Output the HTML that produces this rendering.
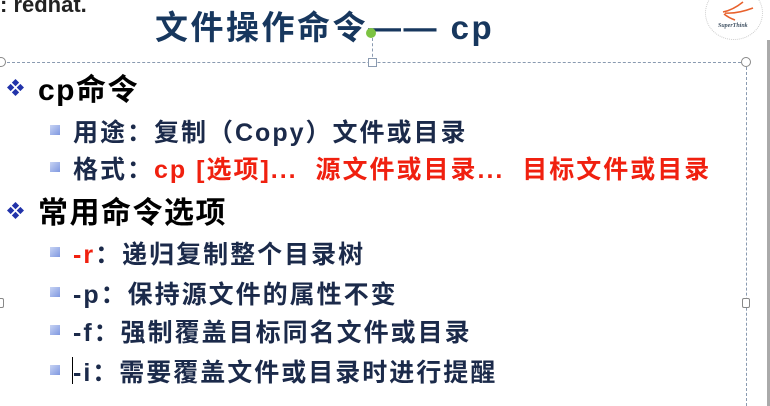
<!DOCTYPE html>
<html><head><meta charset="utf-8"><style>
body{margin:0;width:770px;height:406px;background:#fff;overflow:hidden;position:relative;font-family:"Liberation Sans","Noto Sans CJK SC",sans-serif;font-weight:bold}
.a{position:absolute;white-space:nowrap}
.t{left:155px;top:1px;font-size:33px;color:#17375e;letter-spacing:2.5px}
.h{font-size:30px;color:#000;left:38px;letter-spacing:1.5px}
.l{font-size:25px;color:#1b2a4a;left:73px;letter-spacing:2px}
.r{color:#f0200f}
.sq{position:absolute;left:50px;width:10px;height:10px;background:linear-gradient(135deg,#c8d4f4,#7f98e0)}
.dm{position:absolute;left:7px;width:17px;height:17px}
</style></head><body>
<div class="a" style="left:0;top:-8px;font-size:22px;color:#222;font-weight:bold;letter-spacing:0">: redhat.</div>
<div class="a t">文件操作命令—— cp</div>
<div class="a" style="left:705px;top:-14px;width:56px;height:52px;border:1px dotted #ccc;border-radius:50%"></div>
<svg class="a" style="left:715px;top:0" width="45" height="30"><path d="M8 12 Q18 10 28 2 M10 13 Q22 14 38 8 M9 14 Q14 18 20 20" stroke="#e8612c" stroke-width="1.5" fill="none"/><text x="3" y="27" font-size="6" fill="#456" font-style="italic" font-family="Liberation Serif">SuperThink</text></svg>
<div class="a" style="left:767px;top:40px;width:3px;height:366px;background:#aaa"></div>
<div class="a" style="left:2px;top:62px;width:744px;border-top:1px dashed #8a9ab0"></div>
<div class="a" style="left:746px;top:62px;height:344px;border-left:1px dashed #8a9ab0"></div>
<div class="a" style="left:372px;top:38px;height:24px;border-left:1px dashed #8a9ab0"></div>
<div class="a" style="left:366px;top:28px;width:10px;height:10px;border-radius:50%;background:#7cc342"></div>
<div class="a" style="left:368px;top:58px;width:7px;height:7px;border:1px solid #8a9ab0;background:#fff"></div>
<div class="a" style="left:741px;top:57px;width:8px;height:8px;border:1px solid #888;border-radius:50%;background:#fff"></div>
<div class="a" style="left:-4px;top:57px;width:8px;height:8px;border:1px solid #888;border-radius:50%;background:#fff"></div>
<div class="a" style="left:742px;top:298px;width:6px;height:8px;border:1px solid #888;border-radius:2px;background:#fff"></div>
<div class="a" style="left:-4px;top:298px;width:6px;height:8px;border:1px solid #888;border-radius:2px;background:#fff"></div>

<svg class="dm" style="top:79px" viewBox="0 0 14 14"><path d="M7 0L10 3 7 6 4 3ZM7 8L10 11 7 14 4 11ZM0 7L3 4 6 7 3 10ZM8 7L11 4 14 7 11 10Z" fill="#2233aa"/></svg>
<div class="a h" style="top:65px">cp命令</div>
<div class="sq" style="top:125px"></div>
<div class="a l" style="top:113px">用途：复制（Copy）文件或目录</div>
<div class="sq" style="top:162px"></div>
<div class="a l" style="top:150px">格式：<span class="r">cp [选项]...&nbsp; 源文件或目录...&nbsp; 目标文件或目录</span></div>
<svg class="dm" style="top:202px" viewBox="0 0 14 14"><path d="M7 0L10 3 7 6 4 3ZM7 8L10 11 7 14 4 11ZM0 7L3 4 6 7 3 10ZM8 7L11 4 14 7 11 10Z" fill="#2233aa"/></svg>
<div class="a h" style="top:188px">常用命令选项</div>
<div class="sq" style="top:247px"></div>
<div class="a l" style="top:235px"><span class="r">-r</span>：递归复制整个目录树</div>
<div class="sq" style="top:287px"></div>
<div class="a l" style="top:275px">-p：保持源文件的属性不变</div>
<div class="sq" style="top:325px"></div>
<div class="a l" style="top:313px">-f：强制覆盖目标同名文件或目录</div>
<div class="sq" style="top:365px"></div>
<div class="a l" style="top:353px">-i：需要覆盖文件或目录时进行提醒</div>
<div class="a" style="left:72px;top:357px;width:1px;height:27px;background:#000"></div>
</body></html>
